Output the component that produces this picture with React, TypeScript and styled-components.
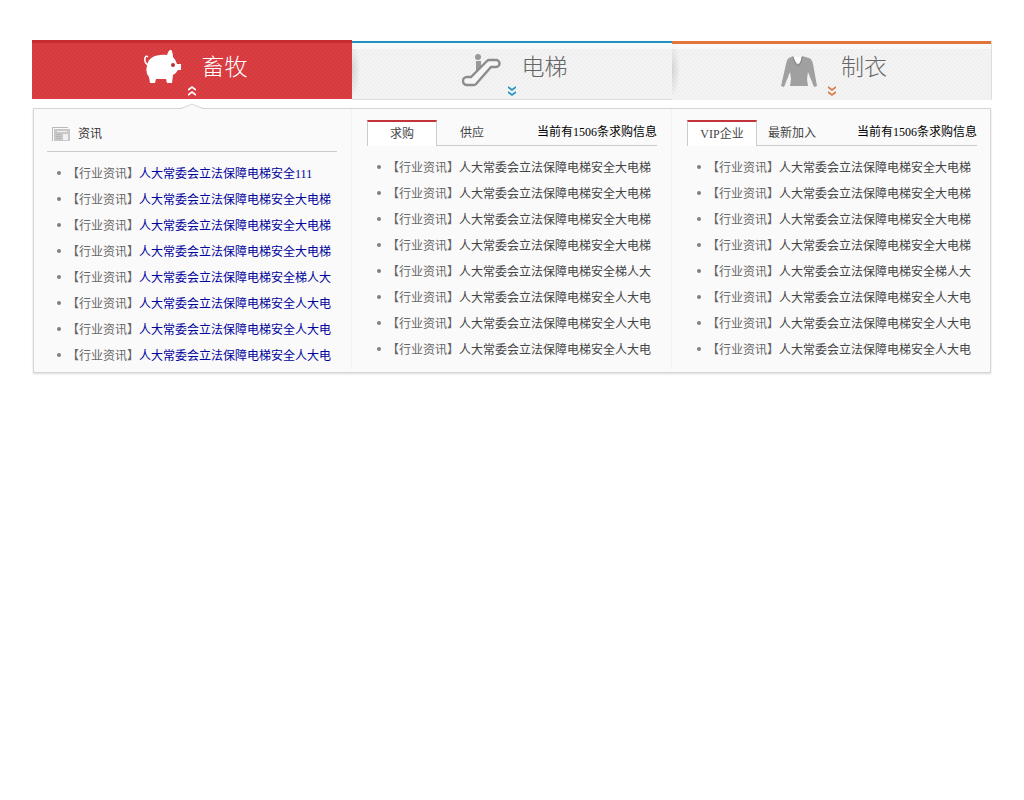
import React from 'react';
import styled, { createGlobalStyle, css } from 'styled-components';

const GlobalStyle = createGlobalStyle`
  * { box-sizing: border-box; }
  body {
    margin: 0;
    background: #fff;
    color: #000;
    font: 12px/26px 'Liberation Serif', 'Noto Sans CJK SC', sans-serif;
  }
  ul { list-style: none; margin: 0; padding: 0; }
  a { text-decoration: none; }
  button { font: inherit; border: 0; padding: 0; cursor: pointer; }
`;

const Page = styled.main`
  padding: 40px 32px;
`;

const IndustryNav = styled.nav`
  display: grid;
  grid-template-columns: repeat(3, 1fr);
  height: 60px;
`;

const IndustryTab = styled.button<{ $accent: string; $line: number; $active?: boolean }>`
  position: relative;
  display: flex;
  justify-content: center;
  gap: 20px;
  height: 60px;
  padding-left: 5px;
  color: #666;
  background:
    radial-gradient(ellipse 8px 28px at 0 50%, rgba(0, 0, 0, 0.12), transparent),
    linear-gradient(135deg, #eeeeee 25%, #f5f5f5 25%, #f5f5f5 50%, #eeeeee 50%, #eeeeee 75%, #f5f5f5 75%) 0 0 / 4px 4px;
  background-clip: padding-box;
  border-top: 1px solid #fff;
  border-bottom: 1px solid #ddd;
  box-shadow: inset 0 ${(p) => p.$line}px ${(p) => p.$accent}, inset 0 8px rgba(255, 255, 255, 0.5);
  &:last-child {
    border-right: 1px solid #ddd;
    border-bottom-color: #f2f2f2;
  }
  ${(p) =>
    p.$active &&
    css`
      height: 59px;
      padding-top: 1px;
      color: #fff;
      border: 0;
      background: linear-gradient(135deg, #d5383d 25%, #da4145 25%, #da4145 50%, #d5383d 50%, #d5383d 75%, #da4145 75%) 0 0 / 4px 4px;
      box-shadow: inset 0 3px #c72c33;
    `}
`;

const TabIcon = styled.svg`
  width: 40px;
  height: 40px;
  margin-top: 9px;
`;

const TabName = styled.span`
  padding-top: 9px;
  font-size: 23px;
  font-weight: 300;
  line-height: 36px;
`;

const Chevrons = styled.svg<{ $up?: boolean }>`
  position: absolute;
  left: 50%;
  bottom: 3px;
  width: 8px;
  height: 10px;
  margin-left: -4px;
  fill: none;
  stroke-width: 1.6;
  transform: ${(p) => (p.$up ? 'scaleY(-1)' : 'none')};
`;

const Panel = styled.section`
  position: relative;
  display: grid;
  grid-template-columns: 318fr 320fr 318fr;
  margin: 8px 1px 0;
  padding-bottom: 3px;
  border: 1px solid #d6d6d6;
  background: #fafafa;
  box-shadow: 0 1px 2px rgba(0, 0, 0, 0.15);
`;

const Pointer = styled.svg`
  position: absolute;
  left: calc(100% / 6 - 12px);
  top: -6px;
  width: 22px;
  height: 7px;
`;

const Column = styled.div`
  padding: 11px 14px 0 15px;
  border-right: 1px solid #f2f2f2;
  &:nth-of-type(1) { padding-left: 13px; }
  &:nth-of-type(3) { padding-right: 13px; border-right: 0; }
`;

const NewsHeading = styled.h2`
  display: flex;
  align-items: center;
  gap: 8px;
  height: 32px;
  margin: 0 0 9px;
  padding: 0 0 3px 5px;
  border-bottom: 1px solid #ccc;
  color: #333;
  font-size: 12px;
  font-weight: 400;
`;

const TabBar = styled.div`
  display: flex;
  height: 26px;
  margin-bottom: 9px;
  box-shadow: inset 0 -1px #ccc;
`;

const ListTab = styled.button<{ $active?: boolean }>`
  width: 70px;
  padding-top: 1px;
  line-height: 25px;
  color: #444;
  background: none;
  ${(p) =>
    p.$active &&
    css`
      padding-top: 0;
      line-height: 24px;
      background: #fff;
      border: 1px solid #ccc;
      border-width: 2px 1px 0;
      border-top-color: #c0343a;
    `}
`;

const Count = styled.span`
  margin-left: auto;
  line-height: 24px;
`;

const Item = styled.li<{ $link: string }>`
  display: flex;
  align-items: center;
  height: 26px;
  padding-left: 10px;
  color: #666;
  white-space: nowrap;
  &::before {
    content: '';
    width: 4px;
    height: 4px;
    margin: 0 6px 2px 0;
    border-radius: 50%;
    background: #808080;
  }
  a { color: ${(p) => p.$link}; }
`;

const PigIcon = () => (
  <TabIcon viewBox="0 0 40 40" aria-hidden="true">
    <path d="M7 15C4 15 2 11 3 8Q4 5 6 7" fill="none" stroke="#fff" strokeWidth="1.6" />
    <path fill="#fff" d="M5 16C6 7 14 4 25 5Q26 1 29 -1Q31 3 31 7Q34 10 35 14H39V20H36Q34 24 31 25L30 33H25L24 29H14L13 33H8L7 27Q3 22 5 16Z" />
    <circle cx="31" cy="15" r="2" fill="#b93238" />
  </TabIcon>
);

const EscalatorIcon = () => (
  <TabIcon viewBox="0 0 40 40" fill="none" aria-hidden="true">
    <circle cx="16" cy="7" r="3" fill="#999" />
    <path d="M14 11h5v8l-5 5z" fill="#999" />
    <path d="M5 35H12Q13 35 14 34L29 17H34A3.5 3.5 0 0 0 34 10H27Q26 10 25 11L9 27H5A3.5 3.5 0 0 0 5 35Z" fill="#f6f6f6" stroke="#8c8c8c" strokeWidth="2.4" />
  </TabIcon>
);

const ShirtIcon = () => (
  <TabIcon viewBox="0 0 40 40" aria-hidden="true">
    <path fill="#fff" d="M12 7L17 14L22 7Z" />
    <path fill="#a0a0a0" d="M12 6Q15 14 17 14Q20 13 21 6L28 8Q31 9 32 14L36 36L33 37L27 22L26 29L27 36H9L10 29L9 22L3 37L0 36L5 14Q6 9 8 8Z" />
    <path fill="none" stroke="#858585" d="M12 7Q14 15 17 16Q20 15 21 7" />
  </TabIcon>
);

const NewsIcon = () => (
  <svg width="18" height="14" viewBox="0 0 18 14" aria-hidden="true">
    <path fill="#bbb" d="M0 0h16v1H1v13H0z" />
    <path fill="#c8c8c8" d="M2 2h16v12H2z" />
    <path fill="#f0f0f0" d="M5 4h10v1H5zM11 7h5v6h-5z" />
    <path fill="#b4b4b4" d="M4 7h5v1H4zM4 9h5v1H4zM4 11h5v1H4z" />
  </svg>
);

const DoubleChevron = ({ color, up }: { color: string; up?: boolean }) => (
  <Chevrons $up={up} viewBox="0 0 8 10" stroke={color} aria-hidden="true">
    <path d="M0 1L4 4L8 1M0 6L4 9L8 6" />
  </Chevrons>
);

const industries = [
  { name: '畜牧', accent: '#c72c33', arrow: '#fff', line: 3, Icon: PigIcon },
  { name: '电梯', accent: '#2093bf', arrow: '#2093bf', line: 2, Icon: EscalatorIcon },
  { name: '制衣', accent: '#e2753a', arrow: '#d87943', line: 3, Icon: ShirtIcon },
];

const base = '人大常委会立法保障电梯安全';
const tails = ['大电梯', '大电梯', '大电梯', '大电梯', '梯人大', '人大电', '人大电', '人大电'];

const HeadlineList = ({ first, link = '#444' }: { first?: string; link?: string }) => (
  <ul>
    {tails.map((tail, i) => (
      <Item key={i} $link={link}>
        【行业资讯】<a href="#">{base}{i === 0 && first ? first : tail}</a>
      </Item>
    ))}
  </ul>
);

const TabbedColumn = ({ tabs }: { tabs: string[] }) => (
  <Column>
    <TabBar>
      {tabs.map((tab, i) => (
        <ListTab key={tab} type="button" $active={i === 0}>{tab}</ListTab>
      ))}
      <Count>当前有1506条求购信息</Count>
    </TabBar>
    <HeadlineList />
  </Column>
);

export default function App() {
  return (
    <Page>
      <GlobalStyle />
      <IndustryNav>
        {industries.map(({ name, accent, arrow, line, Icon }, i) => (
          <IndustryTab key={name} type="button" $accent={accent} $line={line} $active={i === 0}>
            <Icon />
            <TabName>{name}</TabName>
            <DoubleChevron color={arrow} up={i === 0} />
          </IndustryTab>
        ))}
      </IndustryNav>
      <Panel>
        <Pointer viewBox="0 0 22 7" aria-hidden="true">
          <path d="M0 6L11 1L22 6V7H0Z" fill="#fafafa" />
          <path d="M0 5.5L11 1L22 5.5" fill="none" stroke="#d6d6d6" />
        </Pointer>
        <Column>
          <NewsHeading><NewsIcon />资讯</NewsHeading>
          <HeadlineList first="111" link="#00009c" />
        </Column>
        <TabbedColumn tabs={['求购', '供应']} />
        <TabbedColumn tabs={['VIP企业', '最新加入']} />
      </Panel>
    </Page>
  );
}
